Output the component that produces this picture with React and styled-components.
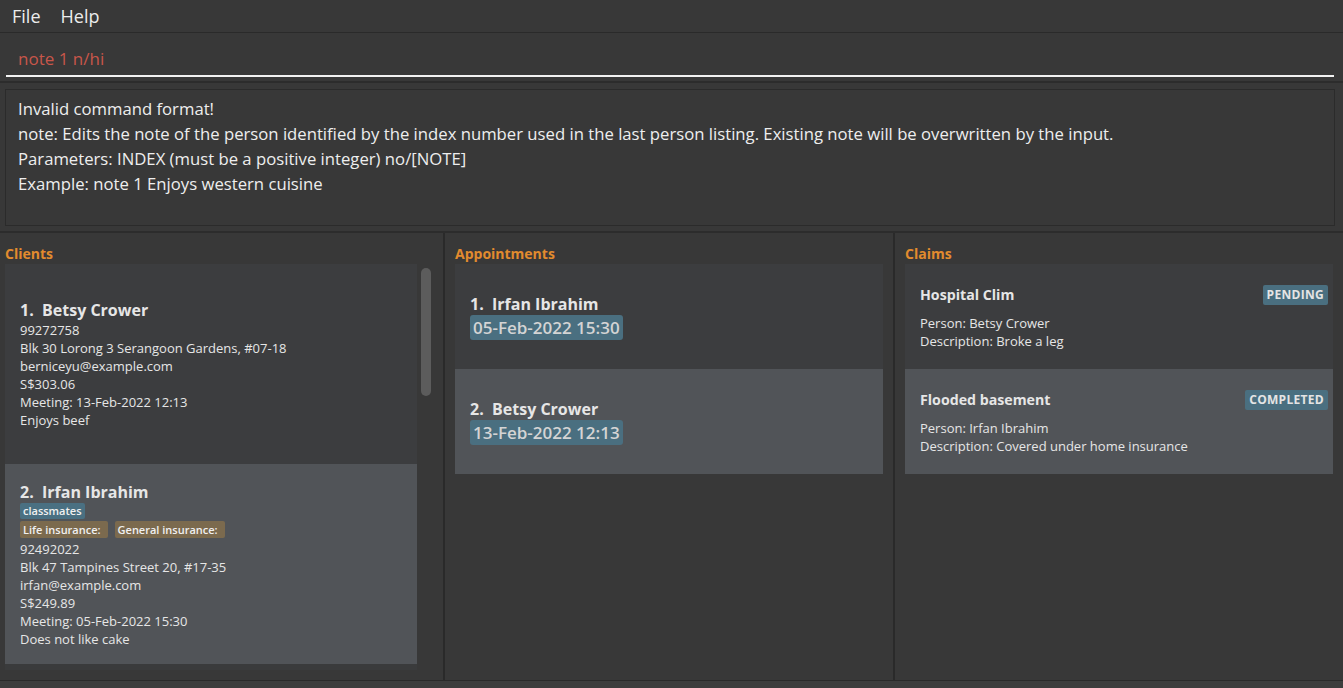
import React from "react";
import styled, { createGlobalStyle } from "styled-components";

const GlobalStyle = createGlobalStyle`
  html, body {
    margin: 0;
    padding: 0;
    background: #383838;
    font-family: "Open Sans", "Noto Sans", sans-serif;
  }
  * { box-sizing: border-box; }
`;

const Window = styled.div`
  width: 1343px;
  height: 688px;
  display: flex;
  flex-direction: column;
  background: #383838;
  overflow: hidden;
`;

const MenuBar = styled.div`
  height: 33px;
  display: flex;
  align-items: center;
  gap: 20px;
  padding: 0 12px;
  border-bottom: 1px solid #2a2a2a;
  color: #ececec;
  font-size: 18px;
`;

const CommandArea = styled.div`
  height: 50px;
  padding: 8px 9px 0 6px;
  border-bottom: 2px solid #2c2c2c;
`;

const CommandInput = styled.div`
  height: 36px;
  display: flex;
  align-items: center;
  padding-left: 12px;
  border-bottom: 2px solid #f2f2f2;
  color: #c8564a;
  font-size: 17px;
`;

const ResultArea = styled.div`
  padding: 6px 8px 5px 5px;
  border-bottom: 2px solid #2c2c2c;
`;

const ResultBox = styled.div`
  height: 137px;
  border: 1px solid #2b2b2b;
  padding: 6px 12px;
  color: #eeeeee;
  font-size: 16.7px;
  line-height: 25px;
`;

const Panels = styled.div`
  flex: 1;
  display: flex;
  border-bottom: 1px solid #2a2a2a;
`;

const Panel = styled.div`
  width: ${(p) => p.width}px;
  display: flex;
  flex-direction: column;
  padding: 0 ${(p) => p.right}px 0 ${(p) => p.left}px;
  border-right: ${(p) => (p.last ? "none" : "2px solid #2a2a2a")};
`;

const PanelTitle = styled.div`
  height: 31px;
  display: flex;
  align-items: flex-end;
  padding-bottom: 1px;
  color: #e28b2e;
  font-weight: 700;
  font-size: 14px;
`;

const ListRow = styled.div`
  display: flex;
  gap: 3px;
  height: ${(p) => p.height || "auto"};
`;

const List = styled.div`
  flex: 1;
  display: flex;
  flex-direction: column;
  background: ${(p) => p.bg || "transparent"};
`;

const Scrollbar = styled.div`
  width: 12px;
  padding: 4px 1px;
`;

const Thumb = styled.div`
  height: 128px;
  border-radius: 5px;
  background: #5c5c5c;
`;

const Card = styled.div`
  height: ${(p) => p.height}px;
  background: ${(p) => (p.even ? "#515458" : "#3c3d3f")};
  display: flex;
  flex-direction: column;
  justify-content: center;
  padding: 0 ${(p) => p.padR || 15}px 0 15px;
  color: #e6e6e6;
`;

const Name = styled.div`
  font-weight: 700;
  font-size: 16px;
  line-height: 22px;
  white-space: pre;
`;

const Detail = styled.div`
  font-size: 13px;
  line-height: 18px;
`;

const Tags = styled.div`
  display: flex;
  gap: 7px;
  margin: 0 0 2px;
`;

const Tag = styled.span`
  display: inline-block;
  background: ${(p) => (p.kind === "insurance" ? "#7b6a4e" : "#4a7082")};
  color: #f0f0f0;
  font-size: 11px;
  line-height: ${(p) => (p.kind === "insurance" ? "17px" : "16px")};
  padding: ${(p) => (p.kind === "insurance" ? "0 7px 0 3px" : "0 3px")};
  border-radius: 2px;
  font-weight: 600;
`;

const DateTag = styled.span`
  align-self: flex-start;
  background: #4a6f80;
  color: #d4d4d4;
  font-size: 17px;
  line-height: 25px;
  padding: 0 3px;
  border-radius: 3px;
  font-weight: 600;
`;

const ClaimHead = styled.div`
  display: flex;
  justify-content: space-between;
  align-items: center;
  margin-bottom: 8px;
`;

const ClaimTitle = styled.div`
  font-weight: 700;
  font-size: 14.2px;
  line-height: 22px;
`;

const Status = styled.span`
  background: #4a6f80;
  color: #e4e4e4;
  font-weight: 700;
  font-size: 12px;
  line-height: 20px;
  padding: 0 4px;
  border-radius: 2px;
  letter-spacing: 0.3px;
`;

const StatusBar = styled.div`
  height: 7px;
  background: #3d3d3d;
`;

const clients = [
  {
    name: "1.  Betsy Crower",
    tags: [],
    insurance: [],
    lines: [
      "99272758",
      "Blk 30 Lorong 3 Serangoon Gardens, #07-18",
      "berniceyu@example.com",
      "S$303.06",
      "Meeting: 13-Feb-2022 12:13",
      "Enjoys beef",
    ],
  },
  {
    name: "2.  Irfan Ibrahim",
    tags: ["classmates"],
    insurance: ["Life insurance:", "General insurance:"],
    lines: [
      "92492022",
      "Blk 47 Tampines Street 20, #17-35",
      "irfan@example.com",
      "S$249.89",
      "Meeting: 05-Feb-2022 15:30",
      "Does not like cake",
    ],
  },
];

const appointments = [
  { name: "1.  Irfan Ibrahim", date: "05-Feb-2022 15:30" },
  { name: "2.  Betsy Crower", date: "13-Feb-2022 12:13" },
];

const claims = [
  { title: "Hospital Clim", status: "PENDING", person: "Betsy Crower", desc: "Broke a leg" },
  { title: "Flooded basement", status: "COMPLETED", person: "Irfan Ibrahim", desc: "Covered under home insurance" },
];

export default function App() {
  return (
    <Window>
      <GlobalStyle />
      <MenuBar>
        <span>File</span>
        <span>Help</span>
      </MenuBar>
      <CommandArea>
        <CommandInput>note 1 n/hi</CommandInput>
      </CommandArea>
      <ResultArea>
        <ResultBox>
          <div>Invalid command format!</div>
          <div>
            note: Edits the note of the person identified by the index number used in the last person listing. Existing note will be overwritten by the input.
          </div>
          <div>Parameters: INDEX (must be a positive integer) no/[NOTE]</div>
          <div>Example: note 1 Enjoys western cuisine</div>
        </ResultBox>
      </ResultArea>
      <Panels>
        <Panel width={445} left={5} right={11}>
          <PanelTitle>Clients</PanelTitle>
          <ListRow height="406px">
            <List bg="#3a3b3c">
              {clients.map((c, i) => (
                <Card key={c.name} height={200} even={i % 2 === 1}>
                  <Name>{c.name}</Name>
                  {c.tags.length > 0 && (
                    <Tags>
                      {c.tags.map((t) => (
                        <Tag key={t}>{t}</Tag>
                      ))}
                    </Tags>
                  )}
                  {c.insurance.length > 0 && (
                    <Tags>
                      {c.insurance.map((t) => (
                        <Tag key={t} kind="insurance">{t}</Tag>
                      ))}
                    </Tags>
                  )}
                  {c.lines.map((l) => (
                    <Detail key={l}>{l}</Detail>
                  ))}
                </Card>
              ))}
            </List>
            <Scrollbar>
              <Thumb />
            </Scrollbar>
          </ListRow>
        </Panel>
        <Panel width={450} left={10} right={10}>
          <PanelTitle>Appointments</PanelTitle>
          <List>
            {appointments.map((a, i) => (
              <Card key={a.name} height={105} even={i % 2 === 1}>
                <Name>{a.name}</Name>
                <DateTag>{a.date}</DateTag>
              </Card>
            ))}
          </List>
        </Panel>
        <Panel width={448} left={10} right={10} last>
          <PanelTitle>Claims</PanelTitle>
          <List>
            {claims.map((c, i) => (
              <Card key={c.title} height={105} even={i % 2 === 1} padR={5}>
                <ClaimHead>
                  <ClaimTitle>{c.title}</ClaimTitle>
                  <Status>{c.status}</Status>
                </ClaimHead>
                <Detail>Person: {c.person}</Detail>
                <Detail>Description: {c.desc}</Detail>
              </Card>
            ))}
          </List>
        </Panel>
      </Panels>
      <StatusBar />
    </Window>
  );
}
